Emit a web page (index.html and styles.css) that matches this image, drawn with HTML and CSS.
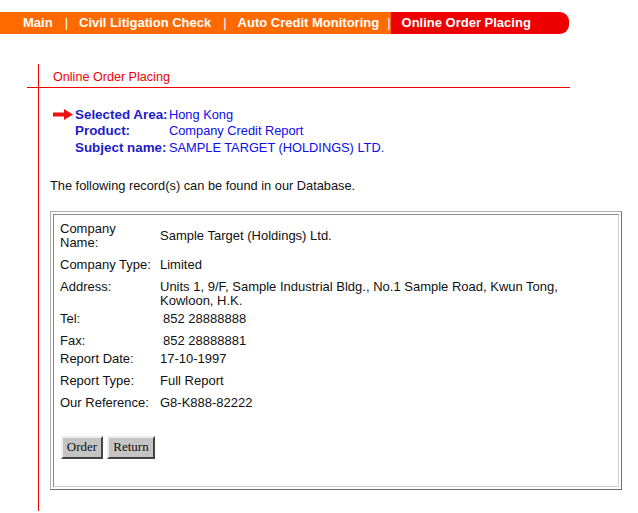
FILE: index.html
```html
<!DOCTYPE html>
<html>
<head>
<meta charset="utf-8">
<title>Online Order Placing</title>
<link rel="stylesheet" href="styles.css">
</head>
<body>
<nav class="nav">
  <div class="nav-main">
    <span class="nav-item">Main</span>
    <span class="sep">|</span>
    <span class="nav-item">Civil Litigation Check</span>
    <span class="sep">|</span>
    <span class="nav-item">Auto Credit Monitoring</span>
    <span class="sep sep-last">|</span>
  </div>
  <div class="nav-active">Online Order Placing</div>
</nav>

<div class="frame">
  <div class="title">Online Order Placing</div>
  <div class="rule"></div>

  <div class="selection">
    <svg class="arrow" width="20" height="11" viewBox="0 0 20 11"><path d="M0 3.5 H11 V0 L20 5.5 L11 11 V7.5 H0 Z" fill="#ee1111"/></svg>
    <span class="sel-label">Selected Area:</span><span class="sel-value">Hong Kong</span>
    <span></span>
    <span class="sel-label">Product:</span><span class="sel-value">Company Credit Report</span>
    <span></span>
    <span class="sel-label">Subject name:</span><span class="sel-value">SAMPLE TARGET (HOLDINGS) LTD.</span>
  </div>

  <p class="intro">The following record(s) can be found in our Database.</p>

  <div class="record">
    <div class="record-inner">
      <div class="row first"><div class="label">Company<br>Name:</div><div class="value mid">Sample Target (Holdings) Ltd.</div></div>
      <div class="row"><div class="label">Company Type:</div><div class="value">Limited</div></div>
      <div class="row"><div class="label">Address:</div><div class="value">Units 1, 9/F, Sample Industrial Bldg., No.1 Sample Road, Kwun Tong,<br>Kowloon, H.K.</div></div>
      <div class="row tight"><div class="label">Tel:</div><div class="value num">852 28888888</div></div>
      <div class="row"><div class="label">Fax:</div><div class="value num">852 28888881</div></div>
      <div class="row tight"><div class="label">Report Date:</div><div class="value">17-10-1997</div></div>
      <div class="row"><div class="label">Report Type:</div><div class="value">Full Report</div></div>
      <div class="row"><div class="label">Our Reference:</div><div class="value">G8-K888-82222</div></div>
      <div class="actions">
        <button class="btn btn-order" type="button">Order</button>
        <button class="btn btn-return" type="button">Return</button>
      </div>
    </div>
  </div>
</div>
</body>
</html>
```

FILE: styles.css
```css
html, body {
  margin: 0;
  padding: 0;
  background: #ffffff;
}

body {
  font-family: "Liberation Sans", Arial, sans-serif;
  font-size: 12.6px;
  color: #111111;
}

.nav {
  display: flex;
  margin-top: 12px;
  height: 22px;
  font-size: 13px;
  font-weight: bold;
  line-height: 22px;
  color: #ffffff;
}

.nav-main {
  display: flex;
  background: #ff6a00;
  padding-left: 23px;
}

.sep {
  margin: 0 11px 0 12px;
  font-weight: normal;
}

.sep-last {
  margin-right: 0;
  margin-left: 8px;
}

.nav-active {
  background: #ee0000;
  padding: 0 38px 0 11px;
  border-radius: 0 9px 9px 0;
}

.frame {
  margin: 30px 0 0 38px;
  border-left: 1px solid #ee0000;
  padding-top: 6px;
  padding-bottom: 21px;
}

.title {
  color: #ee0000;
  line-height: 14px;
  padding-left: 14px;
}

.rule {
  margin: 3px 0 0 -12px;
  width: 543px;
  height: 1px;
  background: #ee0000;
}

.selection {
  display: grid;
  grid-template-columns: 22px 94px auto;
  grid-auto-rows: 16.5px;
  align-items: center;
  margin-top: 18px;
  padding-left: 14px;
}

.arrow {
  display: block;
}

.sel-label {
  font-weight: bold;
  font-size: 13.4px;
  color: #1c1cc8;
}

.sel-value {
  font-size: 12.8px;
  color: #0c0cf0;
}

.intro {
  margin: 23px 0 0 0;
  padding-left: 11px;
  line-height: 14px;
  font-size: 12.8px;
}

.record {
  box-sizing: border-box;
  width: 572px;
  margin: 18px 0 0 11px;
  padding: 2px;
  border: 1px solid;
  border-color: #b0b0b0 #6e6e6e #6e6e6e #b0b0b0;
}

.record-inner {
  border: 1px solid;
  border-color: #8a8a8a #cfcfcf #cfcfcf #8a8a8a;
  padding: 7px 6px 27px 6px;
  line-height: 14px;
  font-size: 13px;
}

.row {
  display: flex;
  margin-top: 8px;
}

.row.first {
  margin-top: 0;
}

.row.tight {
  margin-top: 4px;
}

.label {
  width: 100px;
  flex: none;
}

.value.mid {
  align-self: center;
}

.value.num {
  padding-left: 3px;
}

.actions {
  display: flex;
  gap: 4px;
  margin: 26px 0 0 1px;
}

.btn {
  box-sizing: border-box;
  height: 23px;
  padding: 0;
  background: #c4c4c4;
  border: 2px solid;
  border-color: #eeeeee #444444 #444444 #eeeeee;
  font-family: "Liberation Serif", "Times New Roman", serif;
  font-size: 13px;
  color: #111111;
}

.btn-order {
  width: 42px;
}

.btn-return {
  width: 48px;
}
```
